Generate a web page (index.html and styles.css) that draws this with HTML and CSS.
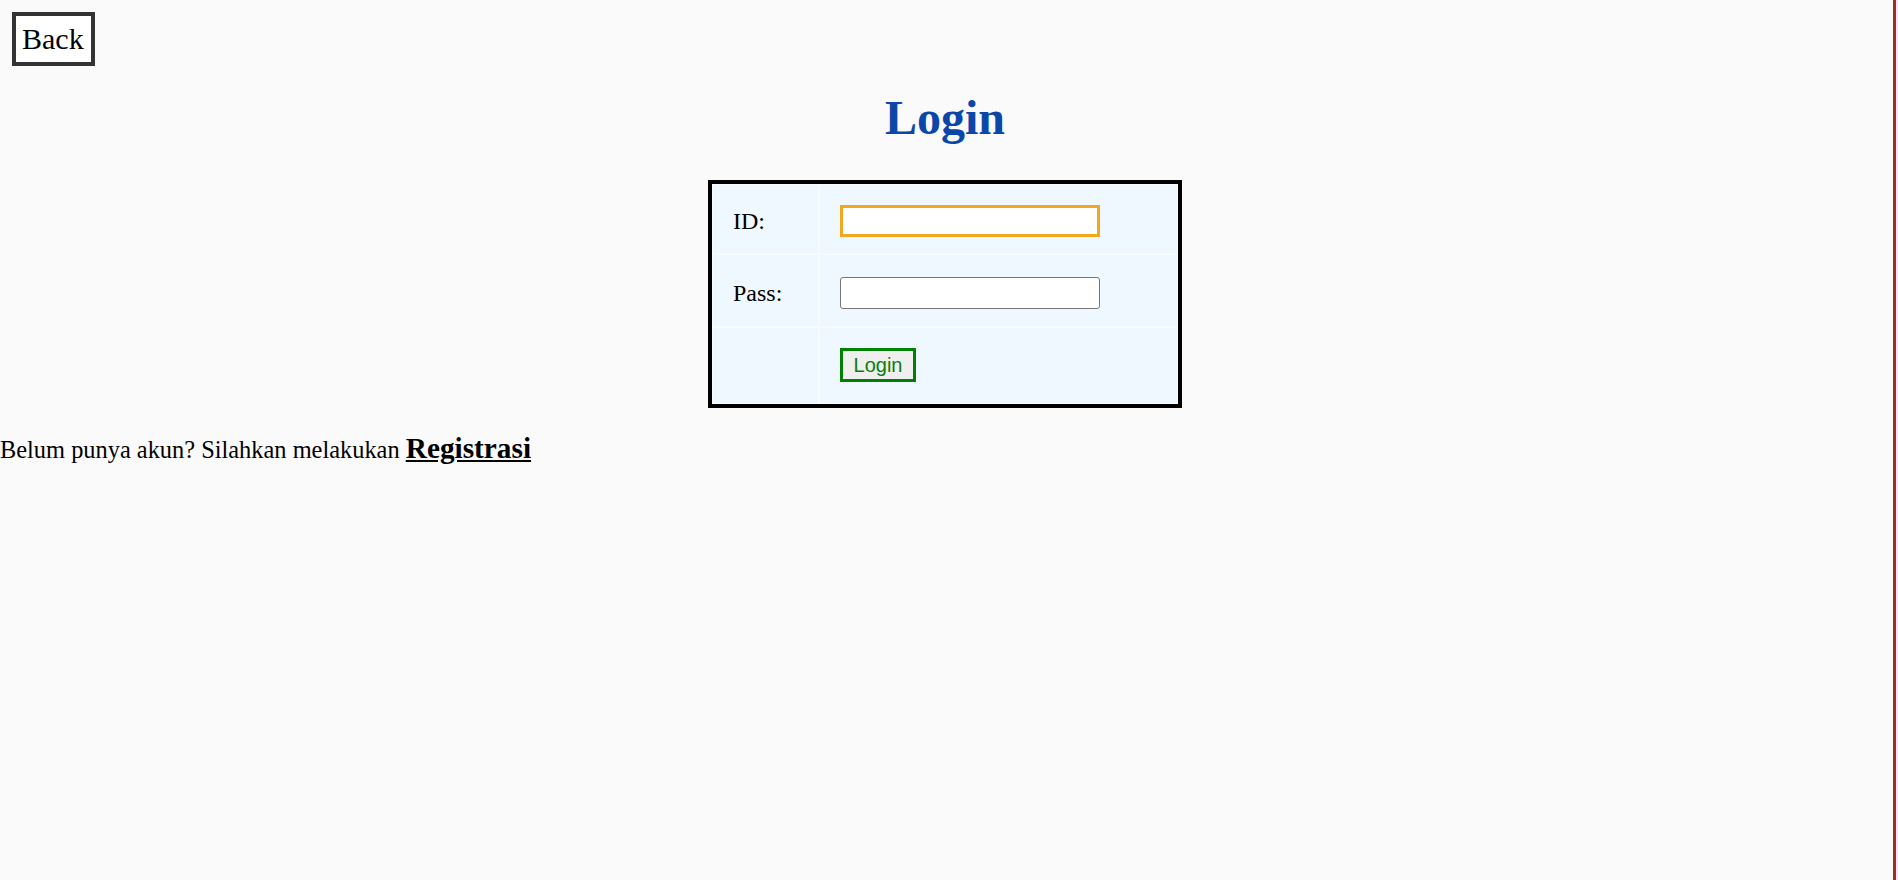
FILE: index.html
```html
<!DOCTYPE html>
<html lang="id">
<head>
<meta charset="utf-8">
<title>Login</title>
<link rel="stylesheet" href="styles.css">
</head>
<body>
<div class="page">
  <div class="top">
    <button class="back" type="button">Back</button>
  </div>
  <h1 class="title">Login</h1>
  <form class="login-form">
    <table class="login-table">
      <tr class="row-id">
        <td class="label-cell"><span class="label">ID:</span></td>
        <td class="field-cell"><input class="input input-id" type="text"></td>
      </tr>
      <tr class="row-pass">
        <td class="label-cell"><span class="label">Pass:</span></td>
        <td class="field-cell"><input class="input input-pass" type="password"></td>
      </tr>
      <tr class="row-submit">
        <td class="label-cell"></td>
        <td class="field-cell"><button class="submit" type="button">Login</button></td>
      </tr>
    </table>
  </form>
  <p class="register">Belum punya akun? Silahkan melakukan <a class="register-link" href="#">Registrasi</a></p>
</div>
</body>
</html>
```
FILE: styles.css
```css
html {
  background: #f6e8e8;
}
body {
  margin: 0;
  display: flex;
  min-height: 880px;
}
.page {
  flex: 1;
  background: #fafafa;
  border-right: 3px solid #a52a2a;
  margin-right: 2px;
  padding-right: 3px;
  font-family: "Liberation Serif", "Times New Roman", serif;
  color: #000;
}
.top {
  display: flex;
  padding: 12px 12px 0;
}
.back {
  margin: 0;
  padding: 6px 7px 6px 6px;
  border: 4px solid #333;
  background: #fff;
  color: #000;
  font-family: "Liberation Serif", "Times New Roman", serif;
  font-size: 30px;
  line-height: 34px;
  cursor: pointer;
}
.title {
  margin: 24px 0 0;
  font-family: "Liberation Serif", "Times New Roman", serif;
  font-size: 48px;
  line-height: 55px;
  font-weight: bold;
  text-align: center;
  color: #0b47a9;
}
.login-form {
  display: flex;
  justify-content: center;
  margin-top: 35px;
}
.login-table {
  border: 4px solid #000;
  border-spacing: 0;
  background: #f0f8ff;
}
.login-table td {
  border: 1px solid #f9fcff;
  background: #eff7ff;
  vertical-align: top;
}
.label-cell {
  width: 65px;
}
.field-cell {
  width: 317px;
}
.row-id td {
  padding: 20px 20px 16px;
}
.row-pass td {
  padding: 22px 20px 17px;
}
.row-submit td {
  padding: 20px 20px 21px;
}
.label {
  display: block;
  font-size: 24px;
  line-height: 32px;
}
.input {
  display: block;
  box-sizing: border-box;
  width: 260px;
  height: 32px;
  margin: 0;
  padding: 1px 3px;
  background: #fff;
  font-family: "Liberation Sans", Arial, sans-serif;
  font-size: 20px;
  outline: none;
}
.input-id {
  border: 3px solid #f2a81d;
  border-radius: 0;
}
.input-pass {
  border: 1px solid #767676;
  border-radius: 3px;
}
.submit {
  display: block;
  box-sizing: border-box;
  width: 76px;
  height: 34px;
  margin: 0;
  padding: 0;
  border: 3px solid #008000;
  background: #efefef;
  color: #0b7d0b;
  font-family: "Liberation Sans", Arial, sans-serif;
  font-size: 20px;
  line-height: 1;
}
.register {
  margin: 24px 0 0;
  font-size: 24.4px;
  line-height: 33px;
}
.register-link {
  font-size: 29.3px;
  font-weight: bold;
  color: #000;
  text-decoration: underline;
}
```
